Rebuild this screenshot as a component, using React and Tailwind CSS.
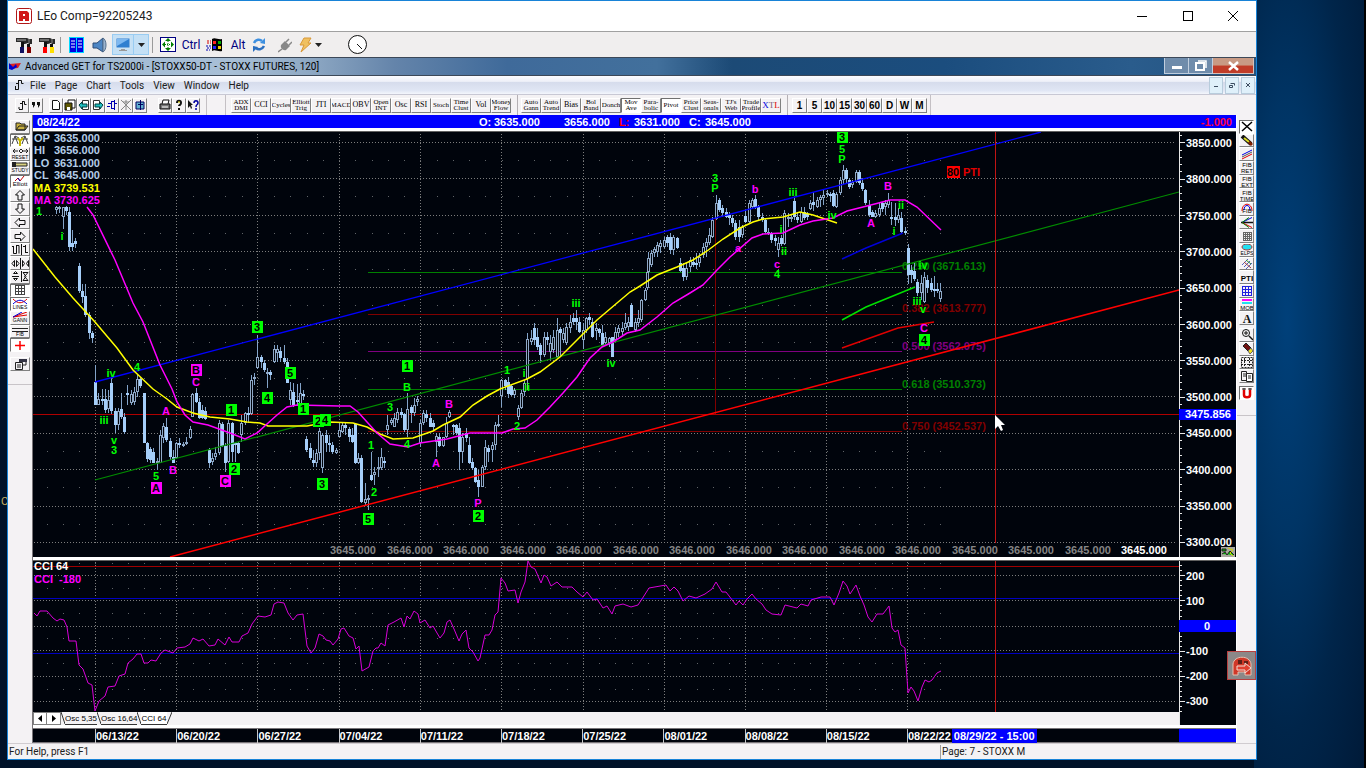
import React from "react";

const GREEN = "#00ff00";
const PINK = "#ff00ff";
const SANS = "'Liberation Sans', Arial, sans-serif";

// Each week group is stored in thirds of a pixel from its own origin:
// [x, high, body top, body bottom, low, filled]
const CANDLES = [
  {
    x: 0,
    y: 110,
    bars: [
      [169, 288, 292, 300, 312, 0], [179, 288, 290, 294, 308, 0], [189, 290, 292, 322, 358, 0], [198, 288, 290, 304, 314, 1],
      [208, 290, 306, 410, 424, 1], [218, 360, 400, 412, 424, 1], [227, 384, 394, 402, 414, 1], [237, 458, 468, 544, 550, 1],
      [247, 522, 544, 560, 580, 1], [257, 522, 558, 616, 620, 1], [267, 606, 616, 668, 686, 1], [277, 662, 668, 684, 700, 1],
    ],
  },
  {
    x: 30,
    y: 290,
    bars: [
      [196, 225, 276, 346, 346, 1], [206, 308, 328, 346, 346, 0], [216, 296, 326, 333, 345, 1], [226, 296, 328, 360, 370, 1],
      [236, 300, 330, 358, 368, 0], [245, 265, 278, 362, 372, 1], [255, 355, 362, 405, 430, 1], [264, 355, 362, 405, 420, 0],
      [275, 310, 358, 380, 388, 1], [284, 370, 382, 425, 432, 1], [293, 285, 310, 316, 345, 1], [304, 300, 313, 338, 345, 0],
      [314, 290, 305, 335, 345, 0], [323, 255, 268, 305, 320, 0], [332, 260, 268, 288, 295, 1], [342, 308, 310, 458, 460, 1],
      [352, 455, 460, 508, 515, 1], [362, 470, 478, 510, 520, 1], [371, 475, 485, 520, 520, 1], [381, 505, 512, 520, 540, 0],
      [391, 420, 435, 520, 520, 0], [400, 400, 408, 445, 460, 0], [410, 385, 410, 450, 455, 1], [420, 445, 452, 502, 510, 1],
      [430, 480, 502, 520, 520, 1], [439, 455, 458, 505, 508, 0], [449, 445, 458, 465, 475, 1], [459, 455, 462, 468, 470, 0],
      [469, 440, 455, 460, 465, 0], [480, 408, 418, 445, 446, 0], [488, 308, 312, 380, 382, 0], [498, 295, 310, 335, 340, 1],
      [508, 325, 335, 385, 388, 1], [518, 345, 360, 385, 388, 1], [527, 350, 362, 388, 390, 1], [538, 475, 480, 518, 535, 1],
      [548, 490, 505, 515, 525, 0], [557, 470, 490, 500, 510, 0], [567, 390, 400, 490, 495, 0], [576, 395, 402, 468, 470, 1],
      [586, 460, 468, 518, 545, 1], [596, 390, 398, 515, 520, 0], [606, 395, 400, 485, 515, 1], [616, 455, 458, 465, 515, 1],
      [625, 455, 460, 490, 492, 1], [635, 375, 400, 435, 455, 0], [645, 365, 370, 400, 405, 0], [655, 350, 368, 375, 400, 1],
      [664, 255, 270, 372, 374, 0], [674, 250, 262, 268, 285, 0], [683, 135, 202, 235, 238, 0], [693, 195, 200, 215, 235, 1],
      [703, 210, 218, 240, 245, 1], [713, 235, 245, 252, 295, 0], [722, 240, 245, 255, 270, 1], [732, 165, 178, 215, 218, 0],
      [742, 165, 178, 188, 215, 0], [752, 170, 182, 205, 215, 1], [762, 165, 205, 215, 222, 1], [771, 205, 215, 278, 280, 1],
      [781, 275, 300, 330, 345, 0], [791, 280, 305, 345, 350, 1], [801, 282, 330, 335, 345, 1], [810, 280, 310, 345, 348, 0],
      [820, 300, 312, 318, 330, 1], [830, 438, 448, 480, 485, 1], [840, 460, 475, 505, 510, 1], [850, 480, 510, 520, 530, 1],
      [859, 478, 490, 520, 530, 0], [869, 415, 422, 490, 510, 0], [878, 430, 435, 535, 550, 0], [888, 420, 435, 460, 485, 1],
      [898, 435, 460, 466, 485, 1], [908, 455, 465, 485, 492, 1], [918, 475, 480, 490, 492, 0],
    ],
  },
  {
    x: 330,
    y: 290,
    bars: [
      [28, 400, 420, 440, 440, 0], [37, 395, 405, 425, 430, 0], [47, 400, 405, 415, 435, 1], [57, 410, 418, 440, 455, 1],
      [67, 415, 435, 455, 458, 1], [77, 398, 402, 520, 522, 1], [86, 490, 505, 520, 522, 0], [95, 495, 505, 635, 640, 1],
      [106, 580, 628, 640, 645, 0], [115, 615, 625, 630, 660, 0], [125, 485, 555, 570, 572, 1], [134, 530, 545, 555, 585, 0],
      [144, 500, 530, 535, 560, 0], [154, 475, 500, 535, 540, 0], [164, 500, 512, 518, 535, 1], [173, 375, 405, 420, 435, 0],
      [183, 385, 390, 400, 405, 0], [193, 370, 385, 410, 412, 0], [203, 355, 365, 390, 400, 0], [213, 355, 365, 375, 385, 1],
      [222, 370, 372, 420, 425, 1], [233, 310, 358, 420, 440, 0], [243, 345, 352, 370, 400, 1], [252, 325, 345, 370, 378, 0],
      [262, 318, 328, 335, 348, 0], [271, 390, 400, 460, 470, 0], [280, 360, 370, 400, 405, 0], [290, 360, 372, 385, 395, 1],
      [300, 370, 385, 410, 412, 1], [310, 390, 400, 410, 420, 1], [319, 430, 438, 455, 500, 0], [329, 430, 440, 468, 472, 1],
      [339, 440, 442, 468, 470, 0], [349, 380, 400, 440, 445, 0], [359, 360, 365, 380, 385, 0], [369, 402, 405, 410, 435, 1],
      [378, 402, 405, 430, 435, 1], [388, 400, 415, 485, 540, 1], [398, 430, 440, 485, 520, 0], [408, 415, 430, 445, 455, 1],
      [418, 440, 465, 520, 522, 1], [427, 505, 515, 535, 540, 1], [437, 530, 535, 575, 580, 1], [446, 540, 570, 590, 620, 1],
      [456, 525, 530, 590, 592, 0], [466, 450, 470, 530, 540, 0], [476, 465, 475, 485, 515, 1], [486, 455, 465, 480, 515, 0],
      [496, 395, 405, 465, 480, 0], [505, 375, 403, 408, 412, 0], [515, 268, 270, 318, 350, 0], [525, 268, 270, 288, 300, 1],
      [535, 262, 275, 312, 325, 1], [544, 285, 288, 315, 318, 1], [554, 295, 300, 315, 325, 0], [564, 345, 355, 380, 390, 0],
      [573, 300, 310, 355, 358, 0], [583, 270, 280, 305, 318, 0], [593, 130, 148, 268, 300, 0], [603, 120, 145, 155, 165, 0],
      [613, 100, 115, 150, 165, 1], [622, 115, 140, 170, 180, 1], [632, 160, 165, 195, 218, 1], [642, 125, 140, 195, 200, 0],
      [652, 125, 140, 150, 165, 1], [661, 135, 160, 185, 210, 0], [671, 120, 140, 180, 190, 0], [681, 85, 120, 200, 205, 0],
      [691, 110, 118, 128, 200, 1], [700, 115, 130, 150, 160, 0], [710, 100, 112, 160, 165, 0], [720, 75, 95, 115, 130, 0],
      [730, 70, 85, 95, 105, 1], [740, 60, 85, 95, 120, 1], [749, 80, 95, 125, 130, 1], [759, 100, 120, 150, 178, 0],
      [769, 80, 85, 120, 130, 0], [778, 70, 80, 90, 105, 1], [788, 85, 95, 140, 145, 1], [798, 100, 115, 122, 150, 0],
      [808, 115, 118, 130, 140, 1], [818, 105, 130, 165, 170, 1], [827, 125, 140, 160, 168, 0], [837, 140, 145, 160, 172, 0],
      [847, 140, 140, 200, 202, 1], [857, 110, 125, 150, 155, 0], [866, 105, 115, 130, 140, 0], [876, 95, 115, 125, 135, 0],
      [886, 70, 100, 115, 120, 0], [896, 80, 95, 110, 122, 0], [905, 40, 45, 110, 112, 1], [915, 85, 95, 120, 125, 0],
      [925, 60, 85, 100, 110, 0], [935, 28, 30, 90, 95, 0], [945, -6, 0, 30, 34, 0], [953, -66, -54, -6, 0, 0],
    ],
  },
  {
    x: 640,
    y: 120,
    bars: [
      [24, 395, 415, 455, 457, 0], [33, 390, 400, 435, 440, 0], [43, 380, 388, 400, 410, 0], [52, 365, 375, 395, 410, 0],
      [62, 360, 370, 380, 400, 0], [72, 350, 360, 380, 385, 0], [82, 345, 352, 370, 380, 1], [92, 340, 350, 390, 402, 1],
      [101, 345, 352, 390, 405, 0], [111, 350, 355, 385, 388, 1], [121, 415, 428, 452, 455, 1], [131, 430, 445, 470, 482, 1],
      [140, 430, 445, 470, 480, 0], [150, 410, 420, 440, 455, 0], [160, 410, 425, 435, 442, 1], [169, 400, 428, 435, 448, 1],
      [179, 400, 410, 430, 440, 0], [189, 370, 380, 405, 415, 0], [199, 355, 365, 380, 410, 0], [209, 325, 345, 370, 375, 0],
      [218, 290, 300, 350, 355, 0], [229, 225, 248, 298, 300, 0], [238, 235, 240, 270, 275, 1], [248, 255, 265, 280, 292, 1],
      [258, 265, 275, 290, 295, 1], [268, 275, 285, 295, 315, 1], [277, 285, 295, 310, 320, 1], [287, 300, 310, 350, 360, 1],
      [297, 300, 320, 350, 365, 1], [307, 315, 320, 345, 355, 0], [317, 270, 288, 305, 308, 1], [327, 240, 250, 305, 308, 0],
      [336, 235, 240, 262, 265, 0], [346, 225, 238, 262, 268, 1], [356, 255, 262, 290, 302, 1], [366, 280, 290, 300, 305, 1],
      [376, 295, 300, 335, 338, 1], [385, 325, 335, 342, 345, 0], [395, 335, 340, 360, 368, 1], [405, 345, 355, 362, 378, 1],
      [414, 350, 370, 390, 412, 0], [424, 345, 355, 372, 378, 1], [434, 270, 280, 372, 375, 0], [444, 280, 290, 298, 320, 0],
      [454, 285, 292, 298, 305, 0], [463, 235, 242, 290, 300, 1], [473, 280, 290, 300, 308, 1], [483, 260, 275, 305, 308, 0],
      [492, 260, 275, 295, 300, 1], [502, 275, 282, 290, 300, 1], [512, 240, 250, 268, 270, 0], [521, 215, 245, 255, 272, 1],
      [531, 230, 240, 262, 265, 0], [541, 225, 232, 240, 260, 0], [551, 210, 225, 235, 255, 0], [561, 210, 220, 226, 232, 0],
      [571, 215, 222, 228, 245, 1], [580, 210, 220, 258, 262, 1], [590, 215, 222, 262, 265, 0], [600, 170, 180, 220, 225, 0],
      [609, 135, 150, 180, 192, 0], [619, 145, 150, 178, 188, 1], [629, 175, 180, 200, 208, 1], [638, 180, 185, 195, 205, 0],
      [648, 150, 155, 185, 190, 0], [658, 150, 155, 190, 195, 1], [668, 175, 188, 208, 212, 1], [677, 208, 210, 250, 255, 1],
      [687, 240, 255, 285, 290, 1], [697, 270, 275, 290, 292, 1], [707, 270, 278, 290, 295, 0], [717, 250, 265, 285, 292, 0],
      [726, 245, 250, 268, 275, 1], [736, 240, 248, 262, 285, 0], [746, 218, 240, 256, 265, 0], [755, 245, 290, 298, 315, 1],
      [765, 250, 292, 300, 318, 1], [775, 265, 285, 300, 310, 0], [785, 275, 295, 335, 340, 1], [795, 320, 332, 340, 345, 1],
      [804, 372, 385, 465, 492, 1], [814, 435, 450, 464, 490, 1], [824, 430, 452, 478, 482, 1], [833, 478, 485, 520, 528, 1],
      [843, 465, 490, 520, 540, 0], [853, 455, 470, 545, 550, 0], [863, 465, 480, 505, 520, 1], [873, 475, 490, 510, 515, 1],
      [883, 468, 506, 512, 530, 1], [893, 490, 507, 512, 520, 1], [902, 490, 512, 538, 545, 0],
    ],
  },
];

const YELLOW_MA =
  "33,249 55,277 73,298 95,322 117,348 133,370 153,389 167,399 177,407 193,413 210,417 230,419 247,422 260,423 268,426 307,426 323,423 330,422 353,423 367,427 380,434 393,439 413,438 433,431 443,425 460,417 473,405 487,396 500,389 527,379 540,372 560,357 577,340 597,320 617,303 630,292 640,286 657,275 677,267 693,260 707,251 723,239 740,228 753,222 763,219 783,217 800,212 813,215 837,223";
const PINK_MA =
  "87,207 93,215 115,260 133,303 143,322 160,365 172,389 177,402 185,415 193,422 208,425 230,433 245,439 257,433 267,424 277,415 287,407 297,405 339,406 350,406 358,412 367,422 377,433 390,444 408,447 420,443 447,439 470,433 502,433 513,429 525,428 537,420 550,407 563,393 577,377 590,358 602,347 613,342 627,333 640,330 657,317 673,303 690,293 703,285 717,270 730,257 752,238 763,234 783,233 800,225 813,221 833,218 847,211 867,206 890,200 905,200 917,207 941,230";

// [text, x, y, colour, boxed]
const WAVES = [
  ["1", 39, 211, GREEN], ["i", 62, 236, GREEN], ["iv", 111, 373, GREEN], ["4", 137, 367, GREEN],
  ["iii", 104, 420, GREEN], ["v", 114, 440, GREEN], ["3", 114, 450, GREEN], ["5", 156, 476, GREEN],
  ["A", 156, 488, PINK, 1], ["A", 166, 411, PINK], ["B", 173, 470, PINK], ["B", 196, 370, PINK, 1],
  ["C", 196, 382, PINK], ["1", 231, 410, GREEN, 1], ["2", 234, 469, GREEN, 1], ["C", 225, 481, PINK, 1],
  ["3", 257, 327, GREEN, 1], ["4", 267, 398, GREEN, 1], ["5", 290, 373, GREEN, 1], ["1", 303, 409, GREEN, 1],
  ["2", 318, 421, GREEN, 1], ["4", 325, 420, GREEN, 1], ["3", 322, 484, GREEN, 1], ["1", 371, 445, GREEN],
  ["2", 374, 492, GREEN], ["5", 368, 519, GREEN, 1], ["3", 390, 407, GREEN], ["1", 407, 366, GREEN, 1],
  ["B", 407, 387, GREEN], ["4", 407, 444, GREEN], ["B", 449, 404, PINK], ["A", 436, 463, PINK],
  ["P", 478, 503, PINK], ["2", 478, 516, GREEN, 1], ["1", 507, 370, GREEN], ["i", 524, 373, GREEN],
  ["ii", 527, 387, GREEN], ["2", 517, 426, GREEN], ["iii", 576, 303, GREEN], ["iv", 611, 363, GREEN],
  ["3", 715, 178, GREEN], ["P", 715, 188, GREEN], ["b", 755, 189, PINK], ["a", 738, 248, PINK],
  ["iii", 793, 192, GREEN], ["i", 781, 229, GREEN], ["ii", 784, 251, GREEN], ["c", 777, 264, PINK],
  ["4", 777, 274, GREEN], ["3", 842, 137, GREEN, 1], ["5", 842, 149, GREEN], ["P", 842, 159, GREEN],
  ["iv", 832, 215, GREEN], ["A", 871, 223, PINK], ["B", 888, 186, PINK], ["ii", 901, 205, GREEN],
  ["i", 894, 231, GREEN], ["iv", 923, 265, GREEN], ["iii", 917, 301, GREEN], ["v", 923, 309, GREEN],
  ["C", 924, 328, PINK], ["4", 924, 340, GREEN, 1],
];

const FIBS = [
  [272, "0.250 (3671.613)", "#008000", 265],
  [314, "0.382 (3613.777)", "#800000", 307],
  [351, "0.500 (3562.075)", "#800080", 345],
  [389, "0.618 (3510.373)", "#008000", 383],
  [431, "0.750 (3452.537)", "#800000", 425],
];

const PRICES = [3850, 3800, 3750, 3700, 3650, 3600, 3550, 3500, 3450, 3400, 3350, 3300];
const WEEKS = ["06/13/22", "06/20/22", "06/27/22", "07/04/22", "07/11/22", "07/18/22", "07/25/22", "08/01/22", "08/08/22", "08/15/22"];
const WEEK_X = [95, 176, 257, 339, 420, 501, 583, 664, 745, 826, 907];
const DOT_X = Array.from({ length: 56 }, (_, i) => Math.round(46.5 + i * 16.25));

const CCI_LINE =
  "34,613 37,616 40,611 47,611 53,618 57,621 60,619 64,620 67,627 69,641 76,641 79,665 83,669 88,683 92,685 95,711 99,701 105,696 108,687 115,686 119,676 125,674 128,663 133,659 137,654 141,654 144,663 148,663 151,660 156,661 161,653 165,650 173,653 177,648 185,647 190,644 193,638 199,641 203,639 209,646 215,645 218,639 225,645 229,637 232,642 239,642 242,636 248,633 252,624 258,616 265,617 271,615 274,604 278,602 284,603 288,613 293,620 297,615 303,614 307,646 311,653 315,648 319,634 323,636 326,640 330,641 333,645 338,639 341,629 344,628 349,636 353,638 356,649 359,646 362,671 369,667 373,651 376,648 378,648 381,643 385,646 388,625 394,622 401,618 404,627 407,616 410,619 414,611 418,614 420,623 425,620 430,628 433,626 437,633 440,638 444,633 447,622 450,620 454,629 459,641 462,634 466,630 469,648 473,652 478,661 480,658 485,635 489,635 492,630 495,615 498,612 501,578 505,583 508,591 515,590 518,603 521,592 525,582 528,561 531,567 535,569 541,583 544,575 547,577 551,586 557,582 562,587 572,587 577,592 583,597 587,592 593,600 597,599 603,608 607,606 612,614 615,606 623,604 631,607 638,605 642,599 649,588 666,585 670,591 674,587 678,591 683,601 689,596 696,598 705,594 712,589 716,582 722,592 726,592 736,605 739,601 743,605 747,599 752,594 756,599 762,604 766,610 772,614 781,615 785,605 797,608 801,604 808,606 811,600 821,597 830,597 834,605 839,593 843,581 847,586 850,594 856,585 860,596 864,605 868,617 872,622 877,614 883,614 889,606 892,628 895,632 898,630 901,645 905,648 908,693 911,687 914,691 918,701 922,687 925,680 929,682 932,680 937,673 941,671";

function Dotted({ x1, y1, x2, y2 }) {
  return <line x1={x1} y1={y1} x2={x2} y2={y2} stroke="#7c7c7c" strokeDasharray="1 2" />;
}

function Candle({ bar, ox, oy }) {
  const [u, high, top, bottom, low, filled] = bar;
  const px = (v) => Math.round(oy + v / 3);
  const x = Math.round(ox + u / 3 - 0.5);
  const h = Math.max(2, px(bottom) - px(top));
  return (
    <g>
      <rect x={x} y={px(high)} width="1" height={Math.max(1, px(low) - px(high))} fill="#83a3c8" />
      <rect x={x - 1} y={px(top)} width="3" height={h} fill={filled ? "#a6cffa" : "#8fa8c6"} />
      {!filled && h > 2 && <rect x={x} y={px(top) + 1} width="1" height={h - 2} fill="#00040c" />}
    </g>
  );
}

function Wave({ item }) {
  const [text, x, y, color, boxed] = item;
  return (
    <g>
      {boxed && <rect x={x - 5} y={y - 6} width="11" height="12" fill={color} />}
      <text x={x} y={y + 4} textAnchor="middle" fill={boxed ? "#000" : color}>
        {text}
      </text>
    </g>
  );
}

function PriceChart() {
  return (
    <svg
      className="block h-[425px] min-w-0 flex-1 bg-[#00040c]"
      viewBox="33 132 1146 425"
      preserveAspectRatio="xMinYMin slice"
      fontFamily={SANS}
      fontSize="11"
      fontWeight="bold"
    >
      <g shapeRendering="crispEdges">
        {PRICES.map((p, i) => (
          <Dotted key={p} x1={i < 2 ? 102 : 34} x2={1176} y1={Math.round(142 + i * 36.35) + 0.5} y2={Math.round(142 + i * 36.35) + 0.5} />
        ))}
        {WEEK_X.map((x) => (
          <Dotted key={x} x1={x + 0.5} x2={x + 0.5} y1={134} y2={543} />
        ))}
        {PRICES.slice(0, 11).map((p, i) =>
          DOT_X.map((x) => <rect key={p + "-" + x} x={x} y={Math.round(160 + i * 36.35)} width="1" height="1" fill="#606468" />)
        )}
        {FIBS.map(([y, , color]) => (
          <rect key={y} x="368" y={y} width="534" height="1" fill={color} />
        ))}
        <rect x="33" y="414" width="1146" height="1" fill="#b00000" />
        <rect x="715" y="205" width="1" height="209" fill="#800000" />
      </g>
      {FIBS.map(([y, text, color, ty]) => (
        <text key={y} x="902" y={ty + 5} fill={color}>
          {text}
        </text>
      ))}
      <g shapeRendering="crispEdges">
        {CANDLES.map((g) => g.bars.map((bar) => <Candle key={g.x + "-" + bar[0]} bar={bar} ox={g.x} oy={g.y} />))}
      </g>
      <g fill="none">
        <path d="M95 382 1041 132" stroke="#0000ff" strokeWidth="1.3" />
        <path d="M95 480 1179 192" stroke="#008c00" strokeWidth="1.2" />
        <path d="M170 557 1179 290" stroke="#ff0000" strokeWidth="1.5" />
        <polyline points={YELLOW_MA} stroke="#ffff00" strokeWidth="1.5" />
        <polyline points={PINK_MA} stroke={PINK} strokeWidth="1.5" />
        <path d="M842 259 866 248 903 233" stroke="#0000d8" strokeWidth="1.5" />
        <path d="M842 320 866 307 915 287" stroke="#00e000" strokeWidth="1.5" />
        <path d="M842 348 898 328 934 322" stroke="#e00000" strokeWidth="1.5" />
      </g>
      {WAVES.map((w, i) => (
        <Wave key={i} item={w} />
      ))}
      <rect x="947" y="166" width="13" height="12" fill="#ff0000" />
      <text x="953" y="176" textAnchor="middle" fill="#000">80</text>
      <text x="963" y="176" fill="#e00000">PTI</text>
      <rect x="995" y="132" width="1" height="283" fill="#c01414" />
      <rect x="995" y="415" width="1" height="128" fill="#c01414" />
      {Array.from({ length: 15 }, (_, i) => (
        <text key={i} x={Math.round(330 + i * 56.5)} y="554" fill={i === 14 ? "#fff" : "#858585"}>
          {i > 0 && i < 11 ? "3646.000" : "3645.000"}
        </text>
      ))}
      {["OP 3635.000", "HI 3656.000", "LO 3631.000", "CL 3645.000", "MA 3739.531", "MA 3730.625"].map((row, i) => {
        const fill = i < 4 ? "#b4cde8" : i === 4 ? "#ffff00" : PINK;
        return (
          <g key={row} fill={fill}>
            <rect x="34" y={132 + Math.round(i * 12.4)} width="66" height="12" fill="#00040c" />
            <text x="34" y={142 + Math.round(i * 12.4)}>{row.slice(0, 2)}</text>
            <text x="54" y={142 + Math.round(i * 12.4)}>{row.slice(3)}</text>
          </g>
        );
      })}
      <path d="M995 415v14l3-3 3 5 2-1-2-5h4z" fill="#fff" />
    </svg>
  );
}

function PriceAxis() {
  return (
    <svg className="block h-[425px] w-[57px] shrink-0 bg-[#00040c]" viewBox="1179 132 57 425" fontFamily={SANS} fontSize="11" fontWeight="bold">
      <g fill="#e8e8e8" shapeRendering="crispEdges">
        <rect x="1179" y="132" width="1" height="425" />
        {Array.from({ length: 57 }, (_, i) => (
          <rect key={i} x="1180" y={Math.round(135 + i * 7.27)} width={i % 5 === 1 ? 5 : 2} height="1" />
        ))}
      </g>
      {PRICES.map((p, i) => (
        <text key={p} x="1186" y={Math.round(147 + i * 36.3)} fill="#fff">{p}.000</text>
      ))}
      <rect x="1179" y="409" width="57" height="11" fill="#0000ff" />
      <text x="1185" y="418" fill="#fff">3475.856</text>
      <rect x="1221" y="547" width="14" height="10" fill="#a8a8a0" />
      <path d="M1222 549h4v2h-4zM1222 554l3-2 2 3 3-4 4 4" fill="#00c000" stroke="#202020" />
      <path d="M1228 548l5 2-3 3 3 3" fill="none" stroke="#d8d800" />
    </svg>
  );
}

function CciChart() {
  return (
    <svg className="block h-[151px] w-full bg-[#00040c]" viewBox="33 561 1146 151" preserveAspectRatio="xMinYMin slice" fontFamily={SANS} fontSize="11" fontWeight="bold">
      <g shapeRendering="crispEdges">
        {[575, 600, 626, 650, 676, 701].map((y) => (
          <Dotted key={y} x1={34} x2={1176} y1={y + 0.5} y2={y + 0.5} />
        ))}
        {WEEK_X.map((x) => (
          <Dotted key={x} x1={x + 0.5} x2={x + 0.5} y1={562} y2={710} />
        ))}
        {[563, 588, 613, 638, 663, 689].map((y) =>
          DOT_X.map((x) => <rect key={y + "-" + x} x={x} y={y} width="1" height="1" fill="#606468" />)
        )}
        <rect x="33" y="566" width="1146" height="1" fill="#a00000" />
        <rect x="33" y="598" width="1146" height="1" fill="#0000c0" />
        <rect x="33" y="653" width="1146" height="1" fill="#0000c0" />
      </g>
      <polyline points={CCI_LINE} fill="none" stroke="#d800d8" />
      <rect x="995" y="561" width="1" height="151" fill="#c01414" />
      <text x="34" y="570" fill="#fff">CCI 64</text>
      <text x="34" y="583" fill={PINK}>CCI</text>
      <text x="59" y="583" fill={PINK}>-180</text>
    </svg>
  );
}

function CciAxis() {
  return (
    <svg className="block h-[164px] w-[57px] shrink-0 bg-[#00040c]" viewBox="1179 561 57 164" fontFamily={SANS} fontSize="11" fontWeight="bold">
      <g fill="#e8e8e8" shapeRendering="crispEdges">
        <rect x="1179" y="561" width="1" height="164" />
        {Array.from({ length: 30 }, (_, i) => (
          <rect key={i} x="1180" y={Math.round(565 + i * 5.05)} width={i % 5 === 2 ? 5 : 2} height="1" />
        ))}
      </g>
      {[200, 100, -100, -200, -300].map((v) => (
        <text key={v} x="1186" y={Math.round(630 - v / 4)} fill="#fff">{v}</text>
      ))}
      <rect x="1179" y="620" width="57" height="12" fill="#0000ff" />
      <text x="1207" y="630" textAnchor="middle" fill="#fff">0</text>
    </svg>
  );
}

function Icon({ w = 16, h = 16, className = "", children }) {
  return (
    <svg width={w} height={h} viewBox={`0 0 ${w} ${h}`} className={"block shrink-0 " + className} fill="none">
      {children}
    </svg>
  );
}

const Hammer = ({ a, b }) => (
  <Icon w={17}>
    <path d="M1 1h11l2 1h3v5h-3l-1-1-3 1H8L6 5H1z" fill="#2a2a2a" />
    <path d="M2 3h9" stroke="#b0b0b0" />
    <path d="M14 2v4" stroke="#888" />
    <path d="M6 5h3v6H6zM12 7h3v4h-3z" fill="#111" />
    <path d="M5 10h4v6H5z" fill={a} />
    <path d="M12 10h4v6h-4z" fill={b} />
  </Icon>
);

function RemoteToolbar() {
  const item = "flex h-6 shrink-0 items-center justify-center";
  return (
    <div className="flex h-[25px] items-center bg-[#f0eeee] text-[12px] text-[#000080]" role="toolbar" aria-label="Remote">
      <button className={item + " ml-[7px] w-[17px]"} aria-label="Tools"><Hammer a="#101060" b="#800000" /></button>
      <button className={item + " ml-[6px] w-[17px]"} aria-label="Options"><Hammer a="#ff0000" b="#ffe000" /></button>
      <span className="ml-[5px] h-4 w-px bg-[#9a9a9a]" />
      <button className={item + " ml-[8px] w-[15px]"} aria-label="Panels">
        <Icon w={15} h={16}>
          <path d="M0 0h15v16H0z" fill="#00d8ff" />
          <path d="M1 1h6v14H1zM8 1h6v14H8z" fill="#0000e0" />
          <path d="M2 4h4M2 7h4M2 10h4M9 4h4M9 7h4M9 10h4" stroke="#fff" />
        </Icon>
      </button>
      <button className={item + " ml-[8px] w-[16px]"} aria-label="Sound">
        <Icon w={16}>
          <path d="M1 6h4l6-5v14l-6-4H1z" fill="#4d86c4" stroke="#2c4c78" />
          <path d="M11 1c4 2 4 12 0 14z" fill="#9ab4d0" stroke="#56708c" />
        </Icon>
      </button>
      <button className={item + " ml-[4px] h-[21px]! w-[22px] border border-[#99ccf2] bg-[#c4e0f5]"} aria-label="Screen">
        <Icon w={16} h={15}>
          <rect x="1" y="1" width="14" height="10" fill="#2f7fd0" stroke="#d0e4f4" />
          <path d="M2 2h12L2 9z" fill="#7db8f0" />
          <path d="M6 12h4v1h2v1H4v-1h2z" fill="#999" />
        </Icon>
      </button>
      <button className={item + " h-[21px]! w-[15px] border border-l-0 border-[#99ccf2] bg-[#c4e0f5]"} aria-label="Screen options">
        <Icon w={7} h={4}><path d="M0 0h7L3.500 4z" fill="#222" /></Icon>
      </button>
      <span className="ml-[3px] h-4 w-px bg-[#9a9a9a]" />
      <button className={item + " ml-[7px] w-[16px]"} aria-label="Full screen">
        <Icon w={16} h={15}>
          <rect x=".5" y=".5" width="15" height="14" fill="#fff" stroke="#000080" />
          <path d="M8 1l3 3H5zM8 14l3-3H5zM2 7.500l3-3v6zM14 7.500l-3-3v6z" fill="#008000" />
          <path d="M8 4v7M5 7.500h6" stroke="#008000" strokeDasharray="1 1" />
        </Icon>
      </button>
      <button className={item + " ml-[5px] w-[20px]"}>Ctrl</button>
      <button className={item + " ml-[5px] w-[17px]"} aria-label="Start">
        <Icon w={17} h={14}>
          <path d="M6 1c3-2 6 1 10 0v12c-4 1-7-2-10 0z" fill="#000" />
          <path d="M7 3h3v3H7z" fill="#ff2020" /><path d="M12 3h3v3h-3z" fill="#00b000" />
          <path d="M7 8h3v3H7z" fill="#2020ff" /><path d="M12 8h3v3h-3z" fill="#f0d000" />
          <path d="M1 3h4M1 5h4" stroke="#d00000" strokeDasharray="2 1" />
          <path d="M0 8h5M1 10h4M0 12h4" stroke="#0000b0" strokeDasharray="2 1" />
        </Icon>
      </button>
      <button className={item + " ml-[6px] w-[18px]"}>Alt</button>
      <button className={item + " ml-[5px] w-[14px]"} aria-label="Refresh">
        <Icon w={14}>
          <path d="M2 6c2-4 6-4 8-2" stroke="#3d8fe0" strokeWidth="2.500" />
          <path d="M8 6l5 1V1z" fill="#3d8fe0" />
          <path d="M12 9c-2 4-6 4-8 2" stroke="#2a6fc0" strokeWidth="2.500" />
          <path d="M6 10l-5-1v6z" fill="#2a6fc0" />
        </Icon>
      </button>
      <button className={item + " ml-[12px] w-[14px]"} aria-label="Disconnect">
        <Icon w={14}>
          <path d="M3 8l4-4 5 5-4 4c-3 1-6-2-5-5z" fill="#888" />
          <path d="M8 5l3-3M11 8l3-3M4 12l-4 3" stroke="#888" strokeWidth="1.500" />
        </Icon>
      </button>
      <button className={item + " ml-[7px] w-[14px]"} aria-label="Actions">
        <Icon w={14}><path d="M5 1h7L9 6h3L2 15l3-7H1z" fill="#f0c060" stroke="#d89838" /></Icon>
      </button>
      <button className={item + " ml-[1px] w-[9px]"} aria-label="More actions">
        <Icon w={7} h={4}><path d="M0 0h7L3.500 4z" fill="#222" /></Icon>
      </button>
      <button className={item + " ml-[25px] w-[19px]"} aria-label="Timer">
        <Icon w={19} h={19}>
          <circle cx="9.500" cy="9.500" r="9" fill="#fff" stroke="#111" />
          <path d="M9 9l5 5" stroke="#111" />
        </Icon>
      </button>
    </div>
  );
}

const raised = "border border-t-white border-l-white border-r-[#808080] border-b-[#808080] bg-[#f4f2f4]";
const pressed = "border border-t-[#707070] border-l-[#707070] border-r-white border-b-white bg-white";

function IndicatorButton({ label, on }) {
  const lines = label.split("|");
  const two = lines.length > 1;
  return (
    <button className={"flex h-[15px] w-5 shrink-0 flex-col items-center justify-center overflow-hidden font-['Liberation_Serif',serif] text-[7px] text-black " + (two ? "leading-[6px] " : "leading-[8px] ") + (on ? pressed : raised)}>
      {label === "XTL" ? (
        <span className="text-[9px]"><span className="text-[#0000e0]">X</span><span className="text-[#806080]">T</span><span className="text-[#e00000]">L</span></span>
      ) : (
        lines.map((l) => <span key={l} className={two || l.length > 4 || l === "MACD" ? "" : "text-[8px]"}>{l}</span>)
      )}
    </button>
  );
}

const STUDIES = ["ADX|DMI", "CCI", "Cycles", "Elliott|Trig", "JTI", "MACD", "OBV", "Open|INT", "Osc", "RSI", "Stoch", "Time|Clust", "Vol", "Money|Flow"];
const OVERLAYS = ["Auto|Gann", "Auto|Trend", "Bias", "Bol|Band", "Donch", "Mov|Ave", "Para-|bolic", "Pivot", "Price|Clust", "Seas-|onals", "TJ's|Web", "Trade|Profile", "XTL"];

function SmallButton({ name, children }) {
  return (
    <button aria-label={name} className={"flex h-[15px] w-[14px] shrink-0 items-center justify-center " + raised}>
      <Icon w={12} h={12}>{children}</Icon>
    </button>
  );
}

function ChartToolbar() {
  return (
    <div className="flex h-5 items-center bg-[#f4f2f4]" role="toolbar" aria-label="Chart">
      <div className="ml-[7px] flex">
        <SmallButton name="New chart"><path d="M3 10.500h3.500V2M4 4.500h2M6.500 2.500h2v3h2M3 10v-2" stroke="#111" /></SmallButton>
        <SmallButton name="Quote"><path d="M2 3h3v3l-2 3v-3H2zM7 3h3v3l-2 3v-3H7z" fill="#111" /></SmallButton>
      </div>
      <div className="ml-[6px] flex">
        <SmallButton name="New page"><path d="M2.500 1.500h5l2 2v7h-7z" fill="#fff" stroke="#111" /></SmallButton>
        <SmallButton name="Save page"><path d="M4 1h7v8H4z" fill="#fff" stroke="#111" /><path d="M1 4h7v7H1z" fill="#605800" stroke="#111" /><path d="M3 8h3v3H3z" fill="#fff" /></SmallButton>
        <SmallButton name="Previous page"><path d="M4.500 1.500h6v9h-6z" fill="#fff" stroke="#333" /><path d="M1 6l3-3v2h5v3H4v2z" fill="#20c0c0" stroke="#004040" /></SmallButton>
        <SmallButton name="Next page"><path d="M1.500 1.500h6v9h-6z" fill="#fff" stroke="#333" /><path d="M11 6L8 3v2H3v3h5v2z" fill="#20c0c0" stroke="#004040" /></SmallButton>
        <SmallButton name="Insert page"><path d="M5.500 2v8M5 2.500h3M5 9.500h3M8.500 1v10" stroke="#0000b0" /><path d="M2 4.500h3M1 7.500h3M9 4.500h2" stroke="#0000b0" /></SmallButton>
        <SmallButton name="Remove page"><path d="M1 1l10 10M11 1L1 11M6 1v10M3 3h6" stroke="#888" /></SmallButton>
        <SmallButton name="Copy page"><path d="M2 3h8v7H2z" fill="#60b0d0" stroke="#000060" /><path d="M6.500 1v10M4 5.500h5" stroke="#000060" /></SmallButton>
      </div>
      <div className="ml-[11px] flex">
        <SmallButton name="Print"><path d="M3 5l1-4h6l-1 4" fill="#fff" stroke="#111" /><path d="M1 5h10v5H1z" fill="#777" stroke="#111" /><path d="M3 8h6" stroke="#fff" /></SmallButton>
        <SmallButton name="Help"><path d="M4 4c0-3 4-3 4 0 0 2-2 2-2 3M6 9v2" stroke="#111" strokeWidth="2" /><path d="M5 3h2" stroke="#e8e000" /></SmallButton>
        <SmallButton name="Context help"><path d="M1 1v8l2-2 1 3 1-1-1-3h2z" fill="#111" /><path d="M7 4c0-3 4-3 4 0 0 2-2 1-2 4M9 9v2" stroke="#0000a0" strokeWidth="1.500" /></SmallButton>
      </div>
      <span className="ml-[6px] h-5 w-px bg-[#c4c0c4]" />
      <span className="ml-[18px] h-5 w-px bg-[#c4c0c4]" />
      <div className="ml-[5px] flex">
        {STUDIES.map((s) => <IndicatorButton key={s} label={s} />)}
      </div>
      <span className="ml-[6px] h-5 w-px bg-[#b4b0b4]" />
      <div className="ml-[3px] flex">
        {OVERLAYS.map((s) => <IndicatorButton key={s} label={s} on={s === "Mov|Ave" || s === "Pivot"} />)}
      </div>
      <span className="ml-[6px] h-5 w-px bg-[#b4b0b4]" />
      <div className="ml-[4px] flex">
        {["1", "5", "10", "15", "30", "60", "D", "W", "M"].map((s) => (
          <button key={s} className={"flex h-[15px] w-[15px] shrink-0 items-center justify-center font-['Liberation_Sans',sans-serif] text-[10px] font-bold text-black " + raised}>
            {s}
          </button>
        ))}
      </div>
      <span className="ml-[3px] h-5 w-px bg-[#c4c0c4]" />
    </div>
  );
}

const Tiny = ({ y = 11, children, x = 9, size = 6, weight = "normal" }) => (
  <text x={x} y={y} textAnchor="middle" fontSize={size} fontWeight={weight} fontFamily={SANS} fill="#000">{children}</text>
);

const GridLines = ({ x, y, s, n, color = "#444" }) => (
  <g stroke={color}>
    {Array.from({ length: n + 1 }, (_, i) => (
      <path key={i} d={`M${x + i * s + 0.5} ${y}v${n * s + 1}M${x} ${y + i * s + 0.5}h${n * s + 1}`} />
    ))}
  </g>
);

const LEFT_TOOLS = [
  ["Open", 0, <path key="a" d="M5 3h4l1 1h4v6H5zM5 10l3-4h9l-3 4z" fill="#c8b040" stroke="#222" />],
  ["Scan", 1, <g key="a" stroke="#444"><path d="M1 10l3-8 3 8M4 2l4 2M11 10l3-8 3 8M14 2l-4 2M1 5h6M11 5h6" /><path d="M7 4l2 3 3-3M9 7v5" stroke="#c8b800" strokeWidth="2" /></g>],
  ["Reset", 0, <g key="a"><path d="M2 3l2-2M2 3l2 2M2 3h5M8 3l2-2 2 2-2 2zM12 3h5M17 3l-2-2M17 3l-2 2" stroke="#222" /><Tiny y={11} size={5}>RESET</Tiny></g>],
  ["Study", 0, <g key="a"><path d="M2 2h14v3H2z" fill="#d8d080" stroke="#222" /><path d="M1 1h4v5H1z" fill="#222" /><Tiny y={11} size={5}>STUDY</Tiny></g>],
  ["Elliott", 1, <g key="a"><path d="M4 6l3-3 2 3 4-5" stroke="#c00000" /><path d="M7 3l2 3" stroke="#0000c0" /><Tiny y={11}>Elliott</Tiny></g>],
  ["Up", 0, <path key="a" d="M9 1.500l4.500 4.500h-2.500v5h-4v-5H4.500z" stroke="#111" />],
  ["Down", 0, <path key="a" d="M9 11.500L4.500 7h2.500V2h4v5h2.500z" stroke="#111" />],
  ["Left", 0, <path key="a" d="M4 6.500L8.500 2v2.500H14v4H8.500V11z" stroke="#111" />],
  ["Right", 0, <path key="a" d="M14 6.500L9.500 2v2.500H4v4h5.500V11z" stroke="#111" />],
  ["Bars", 0, <path key="a" d="M2.500 3v7.500h3v-8M1 3.500h2M5 2.500h3v8M10.500 0v12M14.500 2v8M12 3.500h2M15 9.500h2" stroke="#111" />],
  ["Compress", 0, <path key="a" d="M3.500 3.500L1 6.500l2.500 3zM5.500 3.500l2.500 3-2.500 3zM9.500 1v11M11.500 3.500l2 3-2 3zM17.500 3.500l-2 3 2 3z" stroke="#111" />],
  ["Scale", 0, <path key="a" d="M4.500 1.500l2 2h-4zM4.500 10.500l2-2h-4zM1 6.500h7M10.500 0v12M12 2.500h5l-3.500 4 3.500 4h-5l3-4z" stroke="#111" />],
  ["Grid", 1, <GridLines key="a" x={4} y={1} s={3} n={3} />],
  ["Lines", 1, <g key="a"><path d="M2 1c5 5 9 5 14 0" stroke="#e00000" /><path d="M2 6c5-5 9-5 14 0" stroke="#0000e0" /><Tiny y={11} size={5}>LINES</Tiny></g>],
  ["Gann", 0, <g key="a"><path d="M2 6l14-5M2 6l14-2" stroke="#e00000" /><path d="M2 6l9-5" stroke="#0000e0" /><Tiny y={11} size={5}>GANN</Tiny></g>],
  ["Fibonacci", 0, <g key="a"><path d="M1 .5h16M1 3.500h16M1 6.500h16" stroke="#222" /><Tiny y={11} size={5}>FIB</Tiny></g>],
  ["Crosshair", 1, <path key="a" d="M9 2v9M4 6.500h10" stroke="#ff0000" strokeWidth="1.500" />],
];

function LeftTools() {
  return (
    <div className="flex w-6 shrink-0 flex-col items-center bg-[#f4f2f4] pt-[5px]" role="toolbar" aria-label="View tools">
      <div className="grid h-[232px] w-[20px] auto-rows-fr grid-cols-1">
        {LEFT_TOOLS.map(([name, on, icon]) => (
          <button key={name} aria-label={name} className={"flex min-h-0 items-center justify-center overflow-hidden " + (on ? pressed : raised)}>
            <Icon w={18} h={13}>{icon}</Icon>
          </button>
        ))}
      </div>
      <button aria-label="Properties" className={"mt-[5px] flex h-[14px] w-[20px] items-center justify-center " + raised}>
        <Icon w={18} h={13}><path d="M4.500 4.500h7v7h-7zM8 2h7v5h-3" stroke="#222" /><path d="M8 1h8v3H8z" fill="#334" /><path d="M6 7h4M6 9h4" stroke="#222" /></Icon>
      </button>
      <span className="mt-[13px] h-px w-6 bg-[#c8c4c8]" />
    </div>
  );
}

const stack = (a, b) => (
  <g>
    <Tiny x={7} y={6} size={6}>{a}</Tiny>
    <Tiny x={7} y={12} size={6}>{b}</Tiny>
  </g>
);

const DRAW_TOOLS = [
  ["Close study", 1, <path key="a" d="M2 2l10 9M12 2L2 11" stroke="#000" strokeWidth="1.500" />],
  ["Pencil", 0, <g key="a"><path d="M2 2l9 8" stroke="#111" strokeWidth="4" /><path d="M4 4l5 4" stroke="#d8d820" strokeWidth="2" /><path d="M9 8l3 3" stroke="#802000" strokeWidth="3" /></g>],
  ["Parallel lines", 0, <g key="a"><path d="M2 7l10-5" stroke="#0000e0" /><path d="M2 9l10-5" stroke="#555" /><path d="M2 11l10-5" stroke="#e00000" /></g>],
  ["Fib retracement", 0, stack("FIB", "RET")],
  ["Fib extension", 0, stack("FIB", "EXT")],
  ["Fib time", 0, stack("FIB", "TIME")],
  ["Fib arcs", 0, <g key="a"><path d="M2 9c0-9 10-9 10 0" stroke="#e00000" /><path d="M4 8c0-6 6-6 6 0" stroke="#0000e0" /><Tiny x={7} y={11}>FIB</Tiny></g>],
  ["Gann fan", 0, <g key="a"><path d="M1 6.500h12" stroke="#111" strokeWidth="1.500" /><path d="M2 6.500l10-5" stroke="#0000e0" /><path d="M2 6.500l10 5" stroke="#e00000" /><path d="M2 6.500l7-5M2 6.500l7 5" stroke="#008000" /></g>],
  ["Gann box", 0, <GridLines key="a" x={3} y={2} s={2} n={4} color="#666" />],
  ["Ellipse", 0, <g key="a"><ellipse cx="7" cy="4" rx="5" ry="3" fill="#20e0f0" stroke="#a04040" /><Tiny x={7} y={12} size={5}>ELPS</Tiny></g>],
  ["Pitchfork", 0, <g key="a"><path d="M2 8l6-6M4 10l6-6M6 12l6-6" stroke="#5060c0" /><path d="M4 5l7 6" stroke="#a04040" /><path d="M6 3l5 4" stroke="#309030" /></g>],
  ["PTI", 0, <Tiny key="a" x={7} y={10} size={8} weight="bold">PTI</Tiny>],
  ["Table", 0, <GridLines key="a" x={2} y={2} s={3} n={3} color="#2020e0" />],
  ["MOB", 0, <g key="a"><path d="M2 0h10v3H2z" fill="#ff00ff" /><path d="M2 4h10v2H2z" fill="#20e0f0" /><Tiny x={7} y={12} size={6}>MOB</Tiny></g>],
  ["Text", 0, <text key="a" x="7" y="11" textAnchor="middle" fontSize="12" fontWeight="bold" fontFamily="'Liberation Serif', serif" fill="#111">A</text>],
];

const EDIT_TOOLS = [
  ["Zoom", 0, <g key="a" stroke="#111"><circle cx="6" cy="5" r="3.500" /><path d="M9 8l4 4" strokeWidth="1.500" /><path d="M4 5h4M6 3v4" /></g>],
  ["Eraser", 0, <g key="a"><path d="M3 4l3-3 5 5-3 3z" fill="#701010" stroke="#222" /><path d="M8 9l3-3 2 3-3 3z" fill="#f0e020" stroke="#666" /></g>],
  ["Tile", 0, <g key="a" stroke="#222"><path d="M1.500 1.500h11v10h-11zM1 4.500h11M1 8.500h11M4.500 2v9M9.500 2v9" strokeDasharray="2 1" /></g>],
  ["Copy", 0, <g key="a" stroke="#222"><path d="M1.500 1.500h5v9h-5zM3 4h3M3 6h3" /><path d="M6.500 3.500h6v8h-6zM8 6h3M8 8h3" fill="#fff" /></g>],
];

function ToolGroup({ items, className }) {
  return (
    <div className={"grid w-[15px] auto-rows-fr grid-cols-1 " + className}>
      {items.map(([name, on, icon]) => (
        <button key={name} aria-label={name} className={"flex min-h-0 items-center justify-center overflow-hidden " + (on ? pressed : raised)}>
          <Icon w={14} h={13}>{icon}</Icon>
        </button>
      ))}
    </div>
  );
}

function RightTools() {
  return (
    <div className="flex w-[19px] shrink-0 flex-col items-center bg-[#f4f2f4] pt-[5px]" role="toolbar" aria-label="Drawing tools">
      <ToolGroup items={DRAW_TOOLS} className="h-[205px]" />
      <ToolGroup items={EDIT_TOOLS} className="mt-[3px] h-[55px]" />
      <button aria-label="Snap" className={"mt-[3px] flex h-[14px] w-[15px] items-center justify-center " + pressed}>
        <Icon w={14} h={13}><path d="M4 1v7c0 3 6 3 6 0V1" stroke="#e00000" strokeWidth="2.500" /><path d="M2.500 2h3M8.500 2h3" stroke="#555" strokeWidth="2" /></Icon>
      </button>
      <span className="mt-[15px] h-px w-full bg-[#c8c4c8]" />
      <button aria-label="Remote session" className="relative mt-[235px] flex h-[29px] w-[29px] shrink-0 items-center justify-center self-end border border-[#b84040] bg-[#8c8888]">
        <Icon w={22} h={22}>
          <path d="M2 20V9c1-9 17-9 18 0v11h-6v-3H7v3z" fill="#d03828" stroke="#e8c0b0" />
          <path d="M7 5h4v4H7zM13 6h4v3h-4z" fill="#602018" />
          <path d="M6 11h8V8l6 5-6 5v-3H6z" fill="#e04030" stroke="#f4dcd4" />
        </Icon>
      </button>
    </div>
  );
}

function ChartTabs() {
  return (
    <div className="flex h-[13px] bg-[#f4f2f4] text-[8px] leading-[11px] font-normal text-black">
      <button aria-label="Scroll left" className="flex w-[14px] items-center justify-center border border-[#808080] bg-white">
        <Icon w={4} h={7}><path d="M4 0v7L0 3.500z" fill="#000" /></Icon>
      </button>
      <button aria-label="Scroll right" className="flex w-[14px] items-center justify-center border border-l-0 border-[#808080] bg-white">
        <Icon w={4} h={7}><path d="M0 0v7l4-3.500z" fill="#000" /></Icon>
      </button>
      {["Osc 5,35", "Osc 16,64", "CCI 64"].map((t, i) => (
        <React.Fragment key={t}>
          <Icon w={4} h={13}><path d="M0 0l4 12" stroke="#333" /></Icon>
          <button className={"border-b border-[#333] whitespace-nowrap " + (i === 2 ? "w-[26px] bg-white" : i === 1 ? "w-[36px]" : "w-[32px]")}>{t}</button>
        </React.Fragment>
      ))}
      <Icon w={5} h={13}><path d="M5 0L0 12" stroke="#333" /></Icon>
    </div>
  );
}

function TitleBar() {
  return (
    <div className="flex h-[31px] items-center border-b border-[#a0a0a0] bg-white">
      <Icon w={16} h={16} className="ml-[8px]">
        <rect x=".5" y=".5" width="15" height="15" rx="2" fill="#fff" stroke="#b01818" />
        <path d="M3 13V3h8l2 2v8H9v-2H7v2z" fill="#d01818" />
        <path d="M7 6h2v2H7z" fill="#fff" />
      </Icon>
      <h1 className="ml-[5px] text-[12px] text-[#202020]">LEo Comp=92205243</h1>
      <div className="ml-auto flex">
        <button aria-label="Minimize" className="flex h-[30px] w-[46px] items-center justify-center"><Icon w={11} h={11}><path d="M0 5.500h10" stroke="#000" /></Icon></button>
        <button aria-label="Maximize" className="flex h-[30px] w-[45px] items-center justify-center"><Icon w={10} h={10}><rect x=".5" y=".5" width="9" height="9" stroke="#000" /></Icon></button>
        <button aria-label="Close" className="flex h-[30px] w-[46px] items-center justify-center"><Icon w={11} h={11}><path d="M0 0l10 10M10 0L0 10" stroke="#000" /></Icon></button>
      </div>
    </div>
  );
}

function AppTitleBar() {
  return (
    <div className="flex h-[19px] items-center border-y border-[#3c4858] bg-[linear-gradient(90deg,#9fb9d4_0%,#a8bfd6_18%,#8fa9c4_24%,#6484aa_31%,#3f6a9a_40%,#42709c_52%,#1c4a76_58%,#1b4d7e_75%,#2a5c8c_90%,#235380_100%)]">
      <Icon w={12} h={9} className="ml-px"><path d="M0 2l12-1-3 5-9 1z" fill="#e02020" /><path d="M0 1l4 4 3-3 1 3-5 3-3-1z" fill="#0000d0" /></Icon>
      <h2 className="ml-[4px] text-[10px] leading-[16px] whitespace-nowrap text-black">Advanced GET for TS2000i - [STOXX50-DT - STOXX FUTURES, 120]</h2>
      <div className="mr-[2px] ml-auto flex self-start">
        <button aria-label="Minimize" className="flex h-4 w-[25px] items-center justify-center border border-t-0 border-[#c0cede] bg-[#6f8cab]"><Icon w={12} h={8}><path d="M1 4h10v3H1z" fill="#fff" /></Icon></button>
        <button aria-label="Restore" className="flex h-4 w-[24px] items-center justify-center border border-t-0 border-l-0 border-[#c0cede] bg-[#6f8cab]"><Icon w={13} h={11}><path d="M4 1h8v7" stroke="#fff" strokeWidth="1.500" /><rect x="2" y="3" width="8" height="7" stroke="#fff" strokeWidth="2" /></Icon></button>
        <button aria-label="Close" className="flex h-4 w-[41px] items-center justify-center border border-t-0 border-l-0 border-[#d8c0b8] bg-linear-to-b from-[#c89a84] from-45% to-[#c03c28] to-55%"><Icon w={11} h={10}><path d="M1 1l9 8M10 1L1 9" stroke="#fff" strokeWidth="2.500" /></Icon></button>
      </div>
    </div>
  );
}

function MenuBar() {
  const box = "flex h-[17px] w-[14px] items-center justify-center border border-[#b8ccdc] bg-[#dff0fa]";
  return (
    <nav className="flex h-[19px] items-center border-b border-[#c8c8d4] bg-[linear-gradient(#fcfcff_0%,#eef0f8_30%,#d6dcec_35%,#e0e6f4_80%,#f4f6fc_100%)] text-[10px] text-[#202020]">
      <Icon w={10} h={14} className="ml-[6px]"><path d="M1 11.500h3.500V2M4 5.500h-2M4.500 2.500h3v3h2M1.500 11v-3" stroke="#111" /></Icon>
      <div className="ml-[6px] flex gap-[9px]">
        {["File", "Page", "Chart", "Tools", "View", "Window", "Help"].map((m) => <button key={m}>{m}</button>)}
      </div>
      <div className="mr-px ml-auto flex gap-[2px]">
        <button aria-label="Minimize chart" className={box}><Icon w={6} h={6}><path d="M1 4.500h4" stroke="#3c4c60" /></Icon></button>
        <button aria-label="Restore chart" className={box}><Icon w={6} h={6}><path d="M1.500 1.500h4v2M.5 3.500h3v2h-3z" stroke="#3c4c60" /></Icon></button>
        <button aria-label="Close chart" className={box}><Icon w={6} h={6}><path d="M1 1l4 4M5 1L1 5" stroke="#3c4c60" /></Icon></button>
      </div>
    </nav>
  );
}

function QuoteBar() {
  return (
    <div className="flex h-[13px] bg-[#0000ff] pl-1 leading-[14px] text-white">
      <span className="w-[442px]">08/24/22</span>
      <span className="w-[15px]">O:</span>
      <span className="w-[70px]">3635.000</span>
      <span className="w-[55px]">3656.000</span>
      <span className="w-[15px] text-[#ff0000]">L:</span>
      <span className="w-[55px]">3631.000</span>
      <span className="w-[16px]">C:</span>
      <span>3645.000</span>
      <span className="mr-1 ml-auto text-[#ff0040]">-1.000</span>
    </div>
  );
}

function DateBar() {
  return (
    <div className="flex h-[15px] border-t border-b border-[#787478] leading-[14px] text-white">
      <div className="grid min-w-0 flex-1 grid-cols-[62px_repeat(10,minmax(0,1fr))_272px] bg-[#00040c]">
        <span />
        {WEEKS.map((w) => (
          <span key={w} className="border-l border-[#c8c8c8]">{w}</span>
        ))}
        <span className="flex border-l border-[#c8c8c8]">
          08/22/22
          <span className="ml-px bg-[#0000ff] px-[2px]">08/29/22 - 15:00</span>
        </span>
      </div>
      <span className="w-[57px] shrink-0 bg-[#0000ff]" />
    </div>
  );
}

export default function App() {
  return (
    <div className="relative flex min-h-screen items-start overflow-hidden bg-[#001228] font-['Roboto','Open_Sans',sans-serif]">
      <div className="absolute top-0 right-[2px] h-full w-[110px] bg-[radial-gradient(ellipse_at_30%_42%,#00407a_0%,#003464_35%,#00254a_65%,#001a38_100%)]" />
      <div className="absolute top-0 right-0 h-full w-[2px] bg-black" />
      <span className="absolute top-[494px] left-[1px] text-[11px] text-[#c8b060]">C</span>
      <div className="relative mr-[109px] ml-[7px] min-w-0 flex-1 border border-[#1883d7] bg-[#f4f2f4]">
        <TitleBar />
        <RemoteToolbar />
        <AppTitleBar />
        <MenuBar />
        <ChartToolbar />
        <div className="flex">
          <LeftTools />
          <main className="min-w-0 flex-1 border-l border-[#787478] bg-white pr-px font-['Liberation_Sans',sans-serif] text-[11px] font-bold">
            <QuoteBar />
            <div className="mt-[3px] flex border-t border-[#606060]">
              <PriceChart />
              <PriceAxis />
            </div>
            <div className="mt-[3px] flex border-t border-[#606060]">
              <div className="min-w-0 flex-1">
                <CciChart />
                <ChartTabs />
              </div>
              <CciAxis />
            </div>
            <div className="mt-[3px]">
              <DateBar />
            </div>
          </main>
          <RightTools />
        </div>
        <footer className="flex h-4 items-center border-t border-[#d0ccd0] text-[10px] text-[#202020]">
          <span className="w-[932px] pl-px">For Help, press F1</span>
          <span className="border-l border-[#a0a0a0] pl-px leading-[14px]">Page: 7 - STOXX M</span>
        </footer>
      </div>
    </div>
  );
}
